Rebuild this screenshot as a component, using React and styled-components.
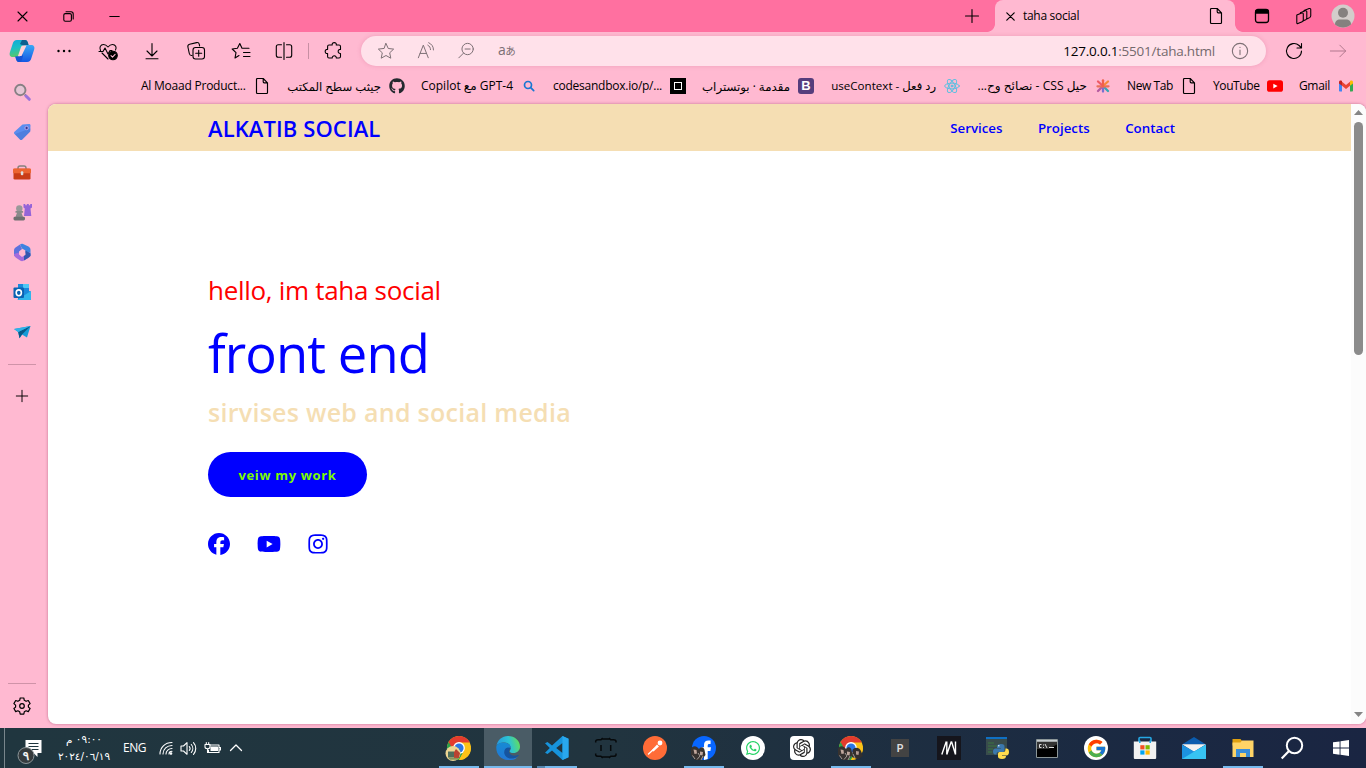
import React from "react";
import styled, { createGlobalStyle } from "styled-components";
import { FaFacebook, FaYoutube, FaInstagram, FaGithub, FaWhatsapp } from "react-icons/fa6";
import { FcGoogle } from "react-icons/fc";
import { SiOpenai } from "react-icons/si";

const GlobalStyle = createGlobalStyle`
  * { box-sizing: border-box; }
  body {
    margin: 0;
    overflow: hidden;
    font-family: "Open Sans", "DejaVu Sans", sans-serif;
    color: #000;
  }
  svg { display: block; flex: none; }
`;

const Screen = styled.div`
  width: 1366px;
  height: 768px;
  display: flex;
  flex-direction: column;
  background: #ffb9d1;
  overflow: hidden;
`;

/* ---------- browser window ---------- */
const TitleBar = styled.div`
  display: flex;
  height: 32px;
  flex: none;
  background: #ff70a0;
`;
const Cell = styled.div`
  display: flex;
  align-items: center;
  justify-content: center;
  flex: none;
  width: ${(p) => p.$w || 44}px;
`;
const Spacer = styled.div`
  flex: 1;
`;
const Tab = styled.div`
  position: relative;
  width: 240px;
  display: flex;
  align-items: center;
  padding: 0 11px;
  background: #ffb9d1;
  border-radius: 8px 8px 0 0;
  &::before,
  &::after {
    content: "";
    position: absolute;
    bottom: 0;
    width: 8px;
    height: 8px;
  }
  &::before {
    left: -8px;
    background: radial-gradient(circle at 0 0, transparent 7.5px, #ffb9d1 8.2px);
  }
  &::after {
    right: -8px;
    background: radial-gradient(circle at 100% 0, transparent 7.5px, #ffb9d1 8.2px);
  }
`;
const TabTitle = styled.span`
  flex: 1;
  margin: -1px 0 0 8px;
  font-size: 12px;
  letter-spacing: -0.3px;
`;
const Toolbar = styled.div`
  display: flex;
  height: 38px;
  flex: none;
`;
const ToolDivider = styled.div`
  width: 1px;
  height: 16px;
  margin: 11px 3px 0 2px;
  background: #c78fa3;
`;
const AddressBar = styled.div`
  width: 905px;
  height: 30px;
  margin: 4px 0 0 5px;
  display: flex;
  align-items: center;
  padding: 0 17px 0 16px;
  gap: 22px;
  color: #7c6f74;
  background: #ffe1ea;
  border-radius: 15px;
  box-shadow: 0 0 4px rgba(190, 80, 120, 0.25);
`;
const Url = styled.span`
  margin-right: -6px;
  font-size: 13.5px;
  letter-spacing: -0.22px;
  white-space: nowrap;
  color: #74696d;
  b {
    font-weight: 400;
    color: #000;
  }
`;
const Translate = styled.span`
  margin: -2px 0 0 1px;
  font: 400 14px/16px "Open Sans", sans-serif;
  i {
    font: 400 10.5px/16px "Noto Sans CJK JP", sans-serif;
    margin-left: -0.5px;
  }
`;
const Main = styled.div`
  display: flex;
  flex: 1;
  min-height: 0;
`;
const Sidebar = styled.div`
  width: 48px;
  padding: 2px 4px 0 0;
  display: flex;
  flex-direction: column;
  align-items: center;
`;
const SideCell = styled.div`
  height: ${(p) => p.$h || 40}px;
  display: flex;
  align-items: center;
`;
const SideLine = styled.div`
  width: 28px;
  height: 1px;
  background: #cf93a8;
  margin: ${(p) => p.$m || "0"};
`;
const Column = styled.div`
  width: 1318px;
  display: flex;
  flex-direction: column;
`;
const Bookmarks = styled.div`
  height: 34px;
  flex: none;
  display: flex;
  align-items: center;
  gap: 16px;
  padding: 0 0 2px 93px;
`;
const Bookmark = styled.div`
  display: flex;
  align-items: center;
  gap: 8px;
`;
const BookmarkText = styled.span`
  width: ${(p) => p.$w}px;
  font-size: ${(p) => p.$size || 12}px;
  letter-spacing: ${(p) => p.$ls || 0}px;
  line-height: 16px;
  white-space: nowrap;
`;
const Square = styled.div`
  width: 16px;
  height: 16px;
  display: flex;
  align-items: center;
  justify-content: center;
  font: 700 13px/16px "Liberation Sans", sans-serif;
  color: #fff;
  border-radius: ${(p) => p.$r || 0}px;
  background: ${(p) => p.$bg};
`;
const Hollow = styled.div`
  width: 8px;
  height: 8px;
  border: 1px solid #fff;
`;
const IconSlot = styled.div`
  width: 16px;
  display: flex;
  justify-content: center;
`;

/* ---------- web page ---------- */
const Viewport = styled.div`
  height: 620px;
  display: flex;
  background: #fff;
  border-radius: 8px;
  overflow: hidden;
  box-shadow: 0 0 3px rgba(130, 40, 75, 0.5);
`;
const Page = styled.div`
  width: 1303px;
`;
const SiteHeader = styled.header`
  height: 47px;
  display: flex;
  align-items: center;
  justify-content: space-between;
  padding: 0 176px 0 160px;
  background: wheat;
  color: #00f;
  font-weight: 600;
`;
const Brand = styled.div`
  font-size: 22px;
  line-height: 30px;
  letter-spacing: 0.1px;
  padding-top: 1px;
`;
const Nav = styled.nav`
  display: flex;
  gap: 35.5px;
  font-size: 13.3px;
  line-height: 18px;
  padding-top: 1px;
`;
const Hero = styled.section`
  padding: 119px 0 0 160px;
  display: flex;
  flex-direction: column;
  align-items: flex-start;
`;
const Greeting = styled.div`
  font-size: 26px;
  line-height: 40px;
  letter-spacing: -0.3px;
  color: #f00;
  white-space: nowrap;
`;
const Role = styled.div`
  margin-top: 8px;
  font-size: 52.5px;
  line-height: 70px;
  letter-spacing: -0.9px;
  color: #00f;
  white-space: nowrap;
`;
const Tagline = styled.div`
  margin-top: 7px;
  font-size: 25px;
  line-height: 34px;
  font-weight: 600;
  letter-spacing: 0.28px;
  color: wheat;
  white-space: nowrap;
`;
const WorkButton = styled.button`
  margin-top: 23px;
  width: 159px;
  height: 45px;
  padding: 0;
  border: 0;
  border-radius: 23px;
  background: #00f;
  color: #7cfc00;
  font: 700 13px/18px "Open Sans", sans-serif;
  letter-spacing: 0.65px;
`;
const Socials = styled.div`
  margin-top: 35px;
  height: 24px;
  display: flex;
  align-items: center;
  gap: 26.5px;
  font-size: 22px;
  color: #00f;
`;
const Scrollbar = styled.div`
  width: 15px;
  padding: 6px 0 7px;
  display: flex;
  flex-direction: column;
  align-items: center;
  background: #fcfcfc;
`;
const Thumb = styled.div`
  width: 9px;
  height: 233px;
  margin-top: 7px;
  border-radius: 5px;
  background: #8b8b8b;
`;

/* ---------- taskbar ---------- */
const Taskbar = styled.div`
  height: 40px;
  flex: none;
  display: flex;
  align-items: stretch;
  color: #fff;
  background: linear-gradient(90deg, #20363f 0%, #21343f 45%, #1b2a42 80%, #1a2542 100%);
`;
const DesktopEdge = styled.div`
  width: 5px;
  border-right: 1px solid #78868c;
`;
const Clock = styled.div`
  width: 60px;
  direction: rtl;
  text-align: center;
  font-family: "DejaVu Sans", sans-serif;
  font-size: 10.5px;
  line-height: 17px;
  padding-top: 3px;
  white-space: nowrap;
`;
const Language = styled.div`
  width: 41px;
  font-size: 12px;
  line-height: 39px;
  text-align: center;
  letter-spacing: -0.4px;
`;
const Apps = styled.div`
  display: flex;
  gap: 1px;
  padding-right: 1px;
`;
const AppButton = styled.div`
  width: 48px;
  display: flex;
  align-items: center;
  justify-content: center;
  background: ${(p) => (p.$stacked ? "linear-gradient(90deg, #5588b0 8px, #76b9ed 8px)" : "linear-gradient(#76b9ed, #76b9ed)")}
    bottom / ${(p) => (p.$active ? 48 : p.$open ? 40 : 0)}px 2px no-repeat ${(p) => (p.$active ? "#4a5c66" : "transparent")};
`;
const Disc = styled.div`
  width: 24px;
  height: 24px;
  display: flex;
  align-items: center;
  justify-content: center;
  border-radius: ${(p) => p.$r || 12}px;
  background: ${(p) => p.$bg};
  color: ${(p) => p.$fg || "#fff"};
`;
const LetterTile = styled.div`
  width: 18px;
  height: 18px;
  background: #434343;
  color: #ddd;
  font: 700 10px/19px "Liberation Sans", sans-serif;
  text-align: center;
`;

function Line({ s = 18, v = 20, c = "currentColor", w = 1.1, children }) {
  return (
    <svg width={s} height={s} viewBox={`0 0 ${v} ${v}`} fill="none" stroke={c} strokeWidth={w} strokeLinecap="round" strokeLinejoin="round">
      {children}
    </svg>
  );
}
function Art({ w = 24, h, v = 24, children }) {
  return (
    <svg width={w} height={h || w} viewBox={`0 0 ${v} ${v}`}>
      {children}
    </svg>
  );
}

const Plus = ({ s = 16 }) => (
  <Line s={s} v={16}><path d="M8 1.500v13M1.500 8h13" /></Line>
);
const FileIcon = () => (
  <Line s={16} v={16} w={1.150}><path d="M2.500 1.500c0-.6.4-1 1-1h5.700l4.300 4.300v9.700c0 .6-.4 1-1 1h-9c-.6 0-1-.4-1-1zM9.200.5v3.300c0 .6.4 1 1 1h3.300" /></Line>
);

const Copilot = () => (
  <svg width="26" height="24" viewBox="0 0 26 24">
    <defs>
      <linearGradient id="cpA" x1="0" y1="0" x2=".2" y2="1"><stop offset="0" stopColor="#11a9d8" /><stop offset=".5" stopColor="#1bbfc5" /><stop offset="1" stopColor="#58c86b" /></linearGradient>
      <linearGradient id="cpB" x1="0" y1="0" x2="0" y2="1"><stop offset="0" stopColor="#39a8f5" /><stop offset="1" stopColor="#1457e3" /></linearGradient>
    </defs>
    <path d="M8 1h8c2 0 2.500 1.500 3 3l.7 2.500H15L9 18H4c-3 0-4-2-3-5l2.600-8C4.300 2.500 5.500 1 8 1Z" fill="url(#cpA)" />
    <path d="M13 1h3c2 0 2.500 1.500 3 3l.7 2.500H14L11 5Z" fill="#0d5f8f" />
    <path d="M18 23h-8c-2 0-2.500-1.500-3-3l-.7-2.500H11L17 6h5c3 0 4 2 3 5l-2.600 8c-.7 2.500-1.900 4-4.400 4Z" fill="url(#cpB)" />
    <path d="M6.300 17.500H11l2-4 1 4-2 5.500h-2c-2 0-2.500-1.500-3-3Z" fill="#1653d4" />
    <path d="M15 6.500h2.500L12.500 17H9l3-9c.5-1.200 1.500-1.500 3-1.500Z" fill="#ffd2d8" />
  </svg>
);
const HeartPulse = () => (
  <Line s={20}>
    <path d="M2.500 9.500C1 6.500 2.500 3.500 5.500 3.500c2 0 3.200 1 4.500 2.500 1.300-1.500 2.500-2.500 4.500-2.500 3 0 4.500 3 3 5.500M4 12l6 6" />
    <path d="M1 10.500h4L7 7l3 6 2-3.500h2" />
    <circle cx="15" cy="14.500" r="4.300" fill="#000" />
    <path d="m13 14.600 1.500 1.500 2.600-2.800" stroke="#ffb9d1" />
  </Line>
);
const Download = () => <Line s={20}><path d="M10 2.500v12M5 10l5 5 5-5M4 17.800h12" /></Line>;
const Collections = () => (
  <Line s={20}>
    <path d="M6 14.500c-1.500.2-2.400-.5-2.700-2L1.900 6C1.600 4.500 2.300 3.500 3.600 3.200l7-1.600c1.400-.3 2.400.4 2.700 1.700l.3 1.600" />
    <rect x="7" y="6.500" width="11.500" height="11.500" rx="2.500" />
    <path d="M12.700 9.200v6M9.700 12.200h6" />
  </Line>
);
const Favorites = () => (
  <Line s={20}>
    <path d="M8 14.500 4 17l1-5.300L1.200 8l5.200-.8L8.800 2.500 11 7.200h7M12.500 11.500H19M12.500 15.500H19" />
  </Line>
);
const Split = () => (
  <Line s={20}>
    <path d="M7.500 3.700H4.300c-1.200 0-2 .8-2 2v8.600c0 1.200.8 2 2 2h3.200M12.500 3.700h3.200c1.200 0 2 .8 2 2v8.600c0 1.200-.8 2-2 2h-3.200M10 1.500v17" />
  </Line>
);
const Puzzle = () => (
  <Line s={20}>
    <path d="M5 4h3.200c-.6-3.200 4.700-3.200 4.100 0H15c.9 0 1.500.6 1.500 1.500v2.900c-3.100-.4-3.100 4.500 0 4.100v3c0 .9-.6 1.500-1.500 1.500h-2.700c.2-3-4.200-3-4.100 0H5c-.8 0-1.400-.6-1.400-1.400v-3.100c-3.200.6-3.200-4.700 0-4.100V5.500C3.600 4.600 4.200 4 5 4Z" />
  </Line>
);
const Star = () => (
  <Line s={18}><path d="m10 1.700 2.500 5.500 6 .7-4.400 4.100 1.200 6-5.300-3-5.300 3 1.200-6L1.500 7.900l6-.7Z" /></Line>
);
const ReadAloud = () => (
  <Line s={18}><path d="M1.500 17.500 7 3.500l5.500 14M3.500 12.700h7M12 3.500c2 1.100 3 2.800 3 5M13 .8c3.500 1.600 5.300 4.200 5.300 8" /></Line>
);
const ZoomOut = () => (
  <Line s={18}><circle cx="11.800" cy="7.800" r="6.300" /><path d="M9 7.800h5.600M7.200 12.400 2 17.600" /></Line>
);
const Workspace = () => (
  <Line s={18} v={18} w={1.300}><rect x="2.500" y="2.500" width="13" height="13" rx="2.500" /><path d="M3 3.500h12v2.500H3z" fill="#000" /></Line>
);
const TabGroups = () => (
  <Line s={18} w={1.200}>
    <path d="m2 9 5.500-2.200c1-.4 1.700.1 1.700 1.100v6.600c0 .9-.4 1.500-1.200 1.800L3.200 18.400C2.500 18.700 2 18.200 2 17.500Z" />
    <path d="M6 7V6.500l5.300-2.200c1-.4 1.800.1 1.800 1.100v6.700c0 .9-.4 1.500-1.200 2l-2.700 1.300M10 4.300V4l5.700-2.200c1-.4 1.800.1 1.800 1.100v6.900c0 .9-.4 1.500-1.200 2l-3.200 1.500" />
  </Line>
);
const Avatar = () => (
  <Art><circle cx="12" cy="12" r="11.500" fill="#d3cdcb" /><circle cx="12" cy="8.700" r="5" fill="#85817f" /><path d="M4 20.500c0-3.500 2-5 5-5h6c3 0 5 1.500 5 5-4.500 4-11.500 4-16 0Z" fill="#85817f" /></Art>
);

/* bookmark favicons */
const ReactLogo = () => (
  <Line s={16} v={24} c="#5fbfe0" w={1.500}>
    <ellipse cx="12" cy="12" rx="11" ry="4.300" /><ellipse cx="12" cy="12" rx="11" ry="4.300" transform="rotate(60 12 12)" /><ellipse cx="12" cy="12" rx="11" ry="4.300" transform="rotate(120 12 12)" /><circle cx="12" cy="12" r="1.500" fill="#5fbfe0" />
  </Line>
);
const Asterisk = () => (
  <svg width="16" height="16" viewBox="0 0 16 16" strokeWidth="2.300" strokeLinecap="round">
    <path d="m8 8 5 5" stroke="#35a6b5" /><path d="M8 8v5.500" stroke="#7a6fd0" /><path d="m8 8-5 5" stroke="#b45ba0" /><path d="M2.500 8.300h11" stroke="#e9705a" /><path d="m8 8-5-4.500" stroke="#ee5a66" /><path d="m8 8 5-4.500" stroke="#f58a3c" /><path d="M8 8V2.300" stroke="#f0604c" />
  </svg>
);
const Gmail = () => (
  <svg width="16" height="16" viewBox="0 0 16 16">
    <path d="M1 4v8.500c0 .6.400 1 1 1h2V6Z" fill="#4285f4" /><path d="M15 4v8.500c0 .6-.4 1-1 1h-2V6Z" fill="#34a853" /><path d="M4 3.800 8 7l4-3.200v4L8 11 4 7.800Z" fill="#ea4335" /><path d="M1 4c0-1.500 1.500-2 2.600-1.200L4 3.100v4.700L1 5.500Z" fill="#c5221f" /><path d="M15 4c0-1.500-1.500-2-2.600-1.200l-.4.300v4.700l3-2.300Z" fill="#fbbc04" />
  </svg>
);
const YouTubeRed = () => (
  <svg width="16" height="16" viewBox="0 0 16 16"><rect y="2.300" width="16" height="11.500" rx="2.600" fill="#f00" /><path d="m6.300 5.800 4.300 2.300-4.300 2.300Z" fill="#fff" /></svg>
);
const BlueSearch = () => (
  <svg width="16" height="16" viewBox="0 0 16 16" fill="none" stroke="#1877d2" strokeWidth="1.700" strokeLinecap="round"><circle cx="7" cy="7" r="3.500" /><path d="m9.700 9.700 3 3" /></svg>
);

const bookmarks = [
  { t: "Al Moaad Product...", w: 105, ls: -0.23, icon: <FileIcon /> },
  { t: "جيثب سطح المكتب", w: 95, size: 11.7, rtl: true, icon: <FaGithub size={16} color="#24292f" /> },
  { t: "Copilot مع GPT-4", w: 92, icon: <BlueSearch /> },
  { t: "codesandbox.io/p/...", w: 109, ls: -0.25, icon: <Square $bg="#000"><Hollow /></Square> },
  { t: "مقدمة · بوتستراب", w: 88, size: 11.8, rtl: true, icon: <Square $bg="#563d7c" $r={3}>B</Square> },
  { t: "رد فعل - useContext", w: 106, size: 11.6, rtl: true, icon: <ReactLogo /> },
  { t: "حيل CSS - نصائح وح...", w: 111, size: 12.1, rtl: true, icon: <Asterisk /> },
  { t: "New Tab", w: 46, ls: -0.4, icon: <FileIcon /> },
  { t: "YouTube", w: 46, ls: -0.4, icon: <YouTubeRed /> },
  { t: "Gmail", w: 31, ls: -0.35, icon: <Gmail /> },
];

/* sidebar drawings */
const SideSearch = () => (
  <Art w={20} v={20}><circle cx="8.300" cy="8" r="5.200" fill="#e5c5d4" stroke="#878084" strokeWidth="1.900" /><path d="m12.700 12.500 1.500 1.500" stroke="#87808a" strokeWidth="2" /><path d="m14 14 3.300 3.300" stroke="#9a72dc" strokeWidth="3" strokeLinecap="round" /></Art>
);
const Tag = () => (
  <Art w={20} v={20}><path d="M10.500 2.500 17 2c1 0 1.500.5 1.500 1.500l-.3 6-8 8c-.7.700-1.500.700-2.200 0l-5.500-5.500c-.7-.7-.7-1.500 0-2.200Z" fill="#5b8def" /><path d="m3 12 5 5.500c.7.700 1.500.700 2.200 0l8-8 .2-3Z" fill="#4674d2" opacity=".6" /><circle cx="14.600" cy="6" r="1.700" fill="#333a90" stroke="#b7a3ef" /></Art>
);
const Toolbox = () => (
  <Art w={20} v={20}><path d="M6 7V6c0-1.300.7-2 2-2h4c1.300 0 2 .7 2 2v1" fill="none" stroke="#86807e" strokeWidth="1.400" /><rect x="1.500" y="6.700" width="17" height="10.800" rx="1.300" fill="#c93c16" /><rect x="1" y="6.500" width="18" height="4.700" rx="1" fill="#ec6430" /><rect x="8.800" y="9.300" width="2.500" height="4" rx="1" fill="#ddd" /></Art>
);
const Chess = () => (
  <Art w={20} v={20}><path d="M11.500 2h1.800v1.200h1.500V2h2v1.200h1.400V2H20v3.500L18.500 6.500l.8 7.500H12l.8-7.500-1.300-1Z" fill="#9564d8" /><circle cx="7.300" cy="6.500" r="3.200" fill="#999" /><path d="M3.500 9h7.600v1.800H9.500L11 15H3.500L5 10.800H3.500Z" fill="#8a8a8a" /><rect x="1.500" y="14.800" width="11.500" height="3.700" rx="1.400" fill="#707070" /></Art>
);
const Office = () => (
  <Art w={20} v={20}><path d="M8 2.500C9 1.800 10 1.700 11 2l5.500 2.500c1.300.8 2 1.800 2 3.500v6l-5-3V8.500L10 6.500Z" fill="#3e83e0" /><path d="M8 2.500 3.500 5.500C2.300 6.500 2 7.500 2 9v4.500L7 16V9.500l3-2.500Z" fill="#5c72dd" /><path d="m2 12 5-1.500v2L10 15l8-5v3.500c0 1-.5 1.800-1.500 2.300l-5 3c-1 .5-2 .5-3 0l-4.500-3C2.700 15 2 13.700 2 12Z" fill="#a56bdc" /><path d="m13.500 8.500 5 3V14l-2 1.800-4.500 2.700V14l1.500-1Z" fill="#3457af" /></Art>
);
const Outlook = () => (
  <Art w={20} v={20}><path d="M6 2h11v7l2 .5V17c0 .6-.4 1-1 1H6Z" fill="#1989dc" /><path d="M11 2h6v4h-6Z" fill="#50c7f3" /><path d="M5 18 19 9v8c0 .6-.4 1-1 1Z" fill="#31b6ec" /><rect x="1.500" y="5.500" width="10.500" height="10.500" rx="1" fill="#0b62b2" /><ellipse cx="6.800" cy="10.800" rx="2.600" ry="2.900" fill="none" stroke="#fff" strokeWidth="1.600" /></Art>
);
const Plane = () => (
  <Art w={20} v={20}><path d="M2 7 18.500 4 15 15.500l-5-3-2.500 3.700L6.200 10Z" fill="#159bd7" /><path d="m6.200 10 12.300-6-8.500 8.500-2.500 3.700Z" fill="#075988" /><path d="M2 7 18.500 4 6.200 10Z" fill="#31b2e8" /></Art>
);
const Gear = () => (
  <Line s={20} w={1.200}><circle cx="10" cy="10" r="2.300" /><path d="m8.200 2-.5 2.300-1.800 1-2.200-.8-1.800 3.100 1.700 1.500v2L1.900 12.500l1.800 3.100 2.200-.8 1.800 1 .5 2.300h3.600l.5-2.300 1.800-1 2.200.8 1.800-3.100-1.700-1.400v-2l1.700-1.500-1.800-3.100-2.200.8-1.800-1-.5-2.300Z" /></Line>
);

/* taskbar drawings */
const Notification = () => (
  <svg width="28" height="36" viewBox="0 0 28 36">
    <path d="M9.500 10h16v13h-4v4l-4-4h-8Z" fill="#fff" /><path d="M12.500 13.500h10M12.500 16.500h10M16 19.500h6.500" stroke="#20363f" strokeWidth="1" />
    <circle cx="10" cy="25.500" r="8" fill="#353b3e" stroke="#8c9699" />
    <text x="10" y="29.500" fontSize="12" fill="#fff" stroke="#fff" strokeWidth=".3" textAnchor="middle" fontFamily="DejaVu Sans">٩</text>
  </svg>
);
const Wifi = () => (
  <Line s={14} v={14}><path d="M1 13C1 6.500 6 1.500 13 1.500M4 13c0-5 4-8.500 9-8.500M7 13c0-3.200 2.700-5.500 6-5.500M10 13c0-1.600 1.300-2.700 3-2.700" /><circle cx="12" cy="12.500" r=".8" fill="#fff" /></Line>
);
const Volume = () => (
  <Line s={17} v={17}><path d="M1 6h2.500L7 2.700v11.600L3.500 11H1ZM9.300 6.500c1 1.200 1 2.800 0 4M11.300 4.500c2 2.300 2 5.700 0 8M13.500 2.700c3 3.300 3 8.300 0 11.600" /></Line>
);
const Battery = () => (
  <Line s={17} v={17}><path d="M6 5h9v7.500H4.500V10M15.500 7.500h1v2.500h-1" /><path d="M7 7h6.500v3.500H7Z" fill="#fff" /><path d="M1 4.500h5V7c0 1-.8 1.700-2.500 1.700S1 8 1 7ZM2.300 4.300V2.500M4.700 4.300V2.500M3.500 9v3.500h1" /></Line>
);
const ChromeBase = () => (
  <>
    <circle cx="13" cy="12" r="12" fill="#fbc217" />
    <path d="M2.600 6A12 12 0 0 0 13 24l5-9-5-3Z" fill="#2ba24c" /><path d="M13 12h11.900A12 12 0 0 1 13 24l5-9Z" fill="#fbc217" />
    <path d="M2.600 6A12 12 0 0 1 23.700 6.500H13V12H6Z" fill="#e33b2e" />
    <circle cx="13" cy="12" r="5.900" fill="#fff" /><circle cx="13" cy="12" r="4.600" fill="#2b76e5" />
  </>
);
const ChromeFarm = () => (
  <svg width="28" height="26" viewBox="-1 -1 28 26"><ChromeBase /><circle cx="7" cy="17.500" r="7.500" fill="#ecd593" /><path d="M2 15.500h6v6H2Z" fill="#4d6e5c" /><path d="m8 16 2-3 4 4-1 5H8Z" fill="#b94331" /><path d="m2 21.500 11 .5-2 1.800H4Z" fill="#87945a" /></svg>
);
const Portrait = () => (
  <>
    <path d="M0 13c1-3 4-3.500 6-2l2 2c2-3 5-2 5.500 1l1 5-4 5H4l-4-5Z" fill="#37322f" />
    <path d="m2.500 13.500 3 .5.500 3.500-2.500.5ZM9 15.500l3 .5-.5 3.500-2.500-.5Z" fill="#c0a79c" />
    <path d="m7 17 2 3-3 3.500M1.500 19.500 4 23M12 20l-2 4" stroke="#a59c97" fill="none" />
  </>
);
const ChromePeople = () => (
  <svg width="28" height="26" viewBox="-1 -1 28 26"><ChromeBase /><Portrait /><path d="M14.500 14c2-3 6.500-3 8.500 1l2 5-5 3.500-6-2.500Z" fill="#332f2d" /><path d="m18 15 3 .5-.5 3.500-2.500-.5Z" fill="#b39c92" /><path d="m15 18 2 4" stroke="#a59c97" /></svg>
);
const FacebookPeople = () => (
  <svg width="28" height="26" viewBox="-1 -1 28 26"><circle cx="13" cy="12" r="12" fill="#0866ff" /><path d="M13 24v-9h-3v-3.800h3V9c0-3.300 1.700-4.600 4.600-4.600h2v3.500h-1.300c-1.200 0-1.600.6-1.600 1.700v1.600H20l-.6 3.800h-2.700v8Z" fill="#fff" /><Portrait /></svg>
);
const Edge = () => (
  <Art>
    <defs>
      <linearGradient id="edA" x1="0" y1=".5" x2="1" y2=".3"><stop offset="0" stopColor="#2597df" /><stop offset=".55" stopColor="#2cc3d4" /><stop offset="1" stopColor="#66df55" /></linearGradient>
      <linearGradient id="edB" x1="0" y1="0" x2="0" y2="1"><stop offset="0" stopColor="#168bd4" /><stop offset="1" stopColor="#2376d5" /></linearGradient>
    </defs>
    <path d="M.4 10C1.300 4.300 6 0 12 0c7 0 12 5 12 10.500 0 4-3 6.500-6.500 6.500-2.500 0-3.900-.9-3.900-1.800 0-.8 1.200-1.300 1.200-3.200C14.800 9 12 6.500 8.500 6.500 4.500 6.500 1.200 8 .4 10Z" fill="url(#edA)" />
    <path d="M.4 10c.8-2 3.600-3.600 7-3.600 4.200 0 7.400 2.600 7.400 5.500-6-1.500-6 6.200-.2 9.300 2.800 1.500 5.400.7 7.700-.8C20 23 16.500 24.500 11.500 24 4.500 23.500-.5 17.500.4 10Z" fill="url(#edB)" />
    <path d="M12 11.500c-3 .5-4.500 3.500-3.500 6.500 1.500 5 8.500 6.500 14 1.700.5-.5.200-1-.5-.7-4 1.700-8.400 0-9-3-.2-1.500.7-2.500 1.500-4Z" fill="#16549f" />
  </Art>
);
const VSCode = () => (
  <Art><path d="m17.500 0 6 2.700v18.600L17.500 24 7 14.500 2.500 18 0 16.700 4.800 12 0 7.300 2.500 6 7 9.500ZM17.500 7l-6.300 5 6.300 5Z" fill="#1794dc" fillRule="evenodd" /><path d="m17.500 0 6 2.700v18.600l-6 2.700Z" fill="#29a8ee" /></Art>
);
const Brackets = () => (
  <svg width="24" height="24" viewBox="0 0 24 24" fill="none" stroke="#06090b" strokeWidth="1.500" strokeLinejoin="round">
    <path d="M1.700 6.500V5Q2 3.700 4 3.700h3L8.700 2M15 2l1.700 1.700h3Q21.700 3.700 22 5v1.500M8 3h8" />
    <path d="M1.700 17.500V19Q2 20.300 4 20.300h3L8.700 22M15 22l1.700-1.700h3Q21.700 20.300 22 19v-1.500M8 21h8M7 9v6M16.700 9v6" />
  </svg>
);
const Postman = () => (
  <Art><circle cx="12" cy="12" r="12" fill="#ff6c37" /><path d="m5.500 18 5.500-5" stroke="#fff" strokeWidth="1.400" strokeLinecap="round" /><path d="m8.500 14.500 5.500-6 2 2-5.500 5Z" fill="#fff" /><circle cx="17" cy="7" r="2.400" fill="#fff" /></Art>
);
const MTile = () => (
  <Art><path d="M0 0h24v24H0Z" fill="#15151c" /><path d="M4.800 18.500 9.300 5.500M9.800 5.500v13M9.800 18.500l4.500-13M14.500 5.500l4 13M18.500 18.500V5.500" fill="none" stroke="#fff" strokeWidth="1.400" /></Art>
);
const Python = () => (
  <svg width="24" height="24" viewBox="0 0 24 24"><path d="M0 1h21v18H0Z" fill="#394c4c" /><path d="M0 1h21v2H0Z" fill="#0f70c4" /><path d="M2 7h6M2 10h9M2 13h5M2 16h4" stroke="#3d7541" /><path d="M15 8c3 0 3.500 1 3.500 2.500V14c0 1.500-1 2-2 2h-4c-1.500 0-2 1-2 2.500h-1.500C7.500 18.500 7 17 7 15.500c0-2 1-3 2.500-3H15V12h-4v-1.500C11 9 12 8 15 8Z" fill="#3b78ad" /><path d="M16 23c-3 0-4-1-4-2.500V18c0-1.500 1-2 2-2h3.500c1.500 0 2-1 2-3.500h1c1.500 0 2.500 1 2.500 3.500 0 2-1 3.500-2.500 3.500H16v.5h4c0 2-1 3-4 3Z" fill="#ffdc4e" /><circle cx="12.800" cy="9.800" r=".7" fill="#fff" /></svg>
);
const Terminal = () => (
  <svg width="22" height="19" viewBox="0 0 22 19"><path d="M.5.500h21v18H.5Z" fill="#000" stroke="#8c9698" /><path d="M1 1h20v1.800H1Z" fill="#c7cdd0" /><path d="M1 3h20v2.500L12 10H1Z" fill="#333" /><path d="M5.500 5.500h-2v3h2M7.500 5.500v1M7.500 8v1M9 5l2 4M13 8.500h5" stroke="#ddd" fill="none" /></svg>
);
const Store = () => (
  <Art><path d="M6 6V2.500c0-.7.300-1 1-1h10c.7 0 1 .3 1 1V6" fill="none" stroke="#26a8e4" strokeWidth="1.600" /><path d="M.8 5.500h22.400v16c0 1-.5 1.500-1.500 1.500H2.300c-1 0-1.500-.5-1.500-1.500Z" fill="#f2f2f2" /><path d="M6 4.500h1.600V7H6ZM16.400 4.500H18V7h-1.600Z" fill="#26a8e4" /><path d="M7.300 9.200h4.200v4.200H7.300Z" fill="#f25022" /><path d="M12.500 9.200h4.200v4.200h-4.200Z" fill="#7fba00" /><path d="M7.300 14.400h4.200v4.200H7.300Z" fill="#00a4ef" /><path d="M12.500 14.400h4.200v4.200h-4.200Z" fill="#ffb900" /></Art>
);
const Mail = () => (
  <Art><path d="M0 8.500 12 1l12 7.500Z" fill="#0b5cae" /><path d="M0 8.300h24L12 16Z" fill="#f2f2f2" /><path d="m0 8.500 12 7 12-7V23H0Z" fill="#1c92e0" /><path d="m0 23 24-14.500V23Z" fill="#37c3f3" /></Art>
);
const Folder = () => (
  <Art><path d="M1.500 3h8l2 2.500H22v4H1.500Z" fill="#e0a010" /><path d="M1.500 6.500h8l1.500-2h11.500V21h-21Z" fill="#ffd466" /><path d="M5 13h14v8h-4v-4H9v4H5Z" fill="#3b8ed8" /></Art>
);
const Magnifier = () => (
  <Art><circle cx="14.500" cy="9.500" r="7.700" fill="none" stroke="#fff" strokeWidth="2" /><path d="M9 15 1.700 22.500" stroke="#fff" strokeWidth="2.200" /></Art>
);
const Windows = () => (
  <Art w={16} v={16}><path d="M0 2.300 6.600 1.400v6.200H0ZM7.500 1.200 16 0v7.600H7.500ZM0 8.500h6.600v6.200L0 13.700ZM7.500 8.500H16V16l-8.500-1.200Z" fill="#fff" /></Art>
);

const apps = [
  { icon: <ChromeFarm />, open: true },
  { icon: <Edge />, active: true },
  { icon: <VSCode />, open: true, stacked: true },
  { icon: <Brackets /> },
  { icon: <Postman /> },
  { icon: <FacebookPeople />, open: true },
  { icon: <Disc $bg="#fff" $fg="#25d366"><FaWhatsapp size={16} /></Disc> },
  { icon: <Disc $bg="#fff" $fg="#222" $r={4}><SiOpenai size={18} /></Disc> },
  { icon: <ChromePeople />, open: true },
  { icon: <LetterTile>P</LetterTile> },
  { icon: <MTile /> },
  { icon: <Python /> },
  { icon: <Terminal /> },
  { icon: <Disc $bg="#fff"><FcGoogle size={21} /></Disc> },
  { icon: <Store /> },
  { icon: <Mail /> },
  { icon: <Folder />, open: true },
  { icon: <Magnifier /> },
  { icon: <Windows /> },
];

export default function App() {
  return (
    <>
      <GlobalStyle />
      <Screen>
        <TitleBar>
          <Cell $w={45}><Line s={11} v={11}><path d="m1 1 9 9M10 1l-9 9" /></Line></Cell>
          <Cell $w={46}><Line s={11} v={11}><rect x=".8" y="2.600" width="7.600" height="7.600" rx="1.500" /><path d="M3 .8h5c1.300 0 2.200.9 2.200 2.200v5" /></Line></Cell>
          <Cell $w={46}><Line s={11} v={11}><path d="M.8 5.500h9.400" /></Line></Cell>
          <Spacer />
          <Cell $w={46}><Plus /></Cell>
          <Tab>
            <Line s={9} v={9} w={1.200}><path d="m.8.8 7.400 7.400M8.200.8.800 8.200" /></Line>
            <TabTitle>taha social</TabTitle>
            <FileIcon />
          </Tab>
          <Cell $w={54}><Workspace /></Cell>
          <Cell $w={30}><TabGroups /></Cell>
          <Cell $w={47}><Avatar /></Cell>
        </TitleBar>
        <Toolbar>
          <Cell $w={43}><Copilot /></Cell>
          <Cell $w={42}><Art w={16} v={16}><circle cx="2.500" cy="8" r="1.200" /><circle cx="8" cy="8" r="1.200" /><circle cx="13.500" cy="8" r="1.200" /></Art></Cell>
          <Cell $w={46}><HeartPulse /></Cell>
          <Cell $w={42}><Download /></Cell>
          <Cell $w={46}><Collections /></Cell>
          <Cell $w={43}><Favorites /></Cell>
          <Cell $w={44}><Split /></Cell>
          <ToolDivider />
          <Cell><Puzzle /></Cell>
          <AddressBar>
            <Star />
            <ReadAloud />
            <ZoomOut />
            <Translate>a<i>あ</i></Translate>
            <Spacer />
            <Url><b>127.0.0.1</b>:5501/taha.html</Url>
            <Line s={18} w={1.200}><circle cx="10" cy="10" r="8.500" /><path d="M10 9v5M10 6v.2" /></Line>
          </AddressBar>
          <Cell $w={56}><Line s={20}><path d="M17.500 10a7.500 7.500 0 1 1-2.400-5.500L17.500 7M17.500 2.500V7H13" /></Line></Cell>
          <Cell $w={32}><Line s={18} c="#b0788d"><path d="M1.500 10h17M12 3.500l6.500 6.500-6.500 6.500" /></Line></Cell>
        </Toolbar>
        <Main>
          <Sidebar>
            <SideCell><SideSearch /></SideCell>
            <SideCell><Tag /></SideCell>
            <SideCell><Toolbox /></SideCell>
            <SideCell><Chess /></SideCell>
            <SideCell><Office /></SideCell>
            <SideCell><Outlook /></SideCell>
            <SideCell><Plane /></SideCell>
            <SideLine $m="12px 0 11px" />
            <SideCell><Plus s={14} /></SideCell>
            <Spacer />
            <SideLine />
            <SideCell $h={44}><Gear /></SideCell>
          </Sidebar>
          <Column>
            <Bookmarks>
              {bookmarks.map((b) => (
                <Bookmark key={b.t}>
                  <BookmarkText $w={b.w} $size={b.size} $ls={b.ls} dir={b.rtl ? "rtl" : "ltr"}>{b.t}</BookmarkText>
                  <IconSlot>{b.icon}</IconSlot>
                </Bookmark>
              ))}
            </Bookmarks>
            <Viewport>
              <Page>
                <SiteHeader>
                  <Brand>ALKATIB SOCIAL</Brand>
                  <Nav><span>Services</span><span>Projects</span><span>Contact</span></Nav>
                </SiteHeader>
                <Hero>
                  <Greeting>hello, im taha social</Greeting>
                  <Role>front end</Role>
                  <Tagline>sirvises web and social media</Tagline>
                  <WorkButton>veiw my work</WorkButton>
                  <Socials><FaFacebook /><FaYoutube size={24} /><FaInstagram /></Socials>
                </Hero>
              </Page>
              <Scrollbar>
                <svg width="9" height="5" viewBox="0 0 9 5"><path d="M0 5 4.500 0 9 5Z" fill="#858585" /></svg>
                <Thumb />
                <Spacer />
                <svg width="9" height="5" viewBox="0 0 9 5"><path d="M0 0 4.500 5 9 0Z" fill="#858585" /></svg>
              </Scrollbar>
            </Viewport>
          </Column>
        </Main>
        <Taskbar>
          <DesktopEdge />
          <Cell $w={49}><Notification /></Cell>
          <Clock>٠٩:٠٠ م<br />٢٠٢٤/٠٦/١٩</Clock>
          <Language>ENG</Language>
          <Cell $w={21}><Wifi /></Cell>
          <Cell $w={24}><Volume /></Cell>
          <Cell $w={24}><Battery /></Cell>
          <Cell $w={24}><Line s={14} v={14} w={1.300}><path d="m1.500 9.500 5.500-5.500 5.500 5.500" /></Line></Cell>
          <Spacer />
          <Apps>
            {apps.map((a, i) => (
              <AppButton key={i} $open={a.open} $active={a.active} $stacked={a.stacked}>{a.icon}</AppButton>
            ))}
          </Apps>
        </Taskbar>
      </Screen>
    </>
  );
}
